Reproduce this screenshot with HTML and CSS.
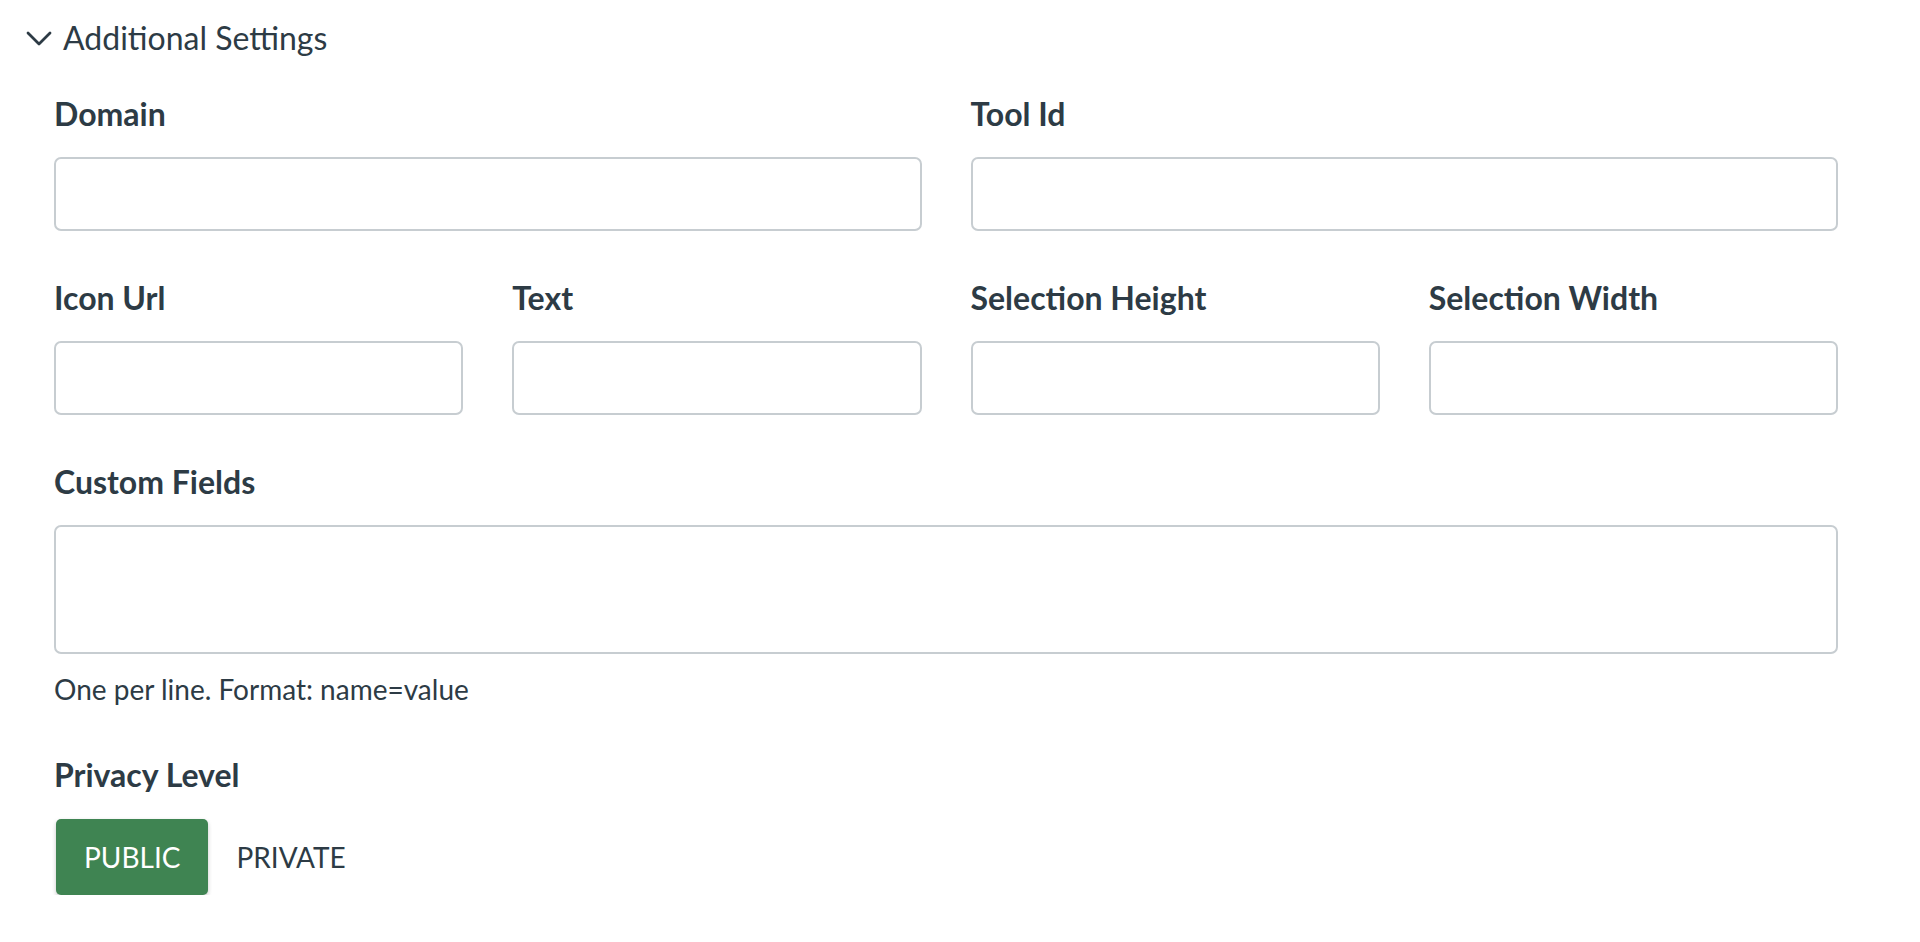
FILE: index.html
```html
<!DOCTYPE html>
<html lang="en">
<head>
<meta charset="utf-8">
<title>Additional Settings</title>
<link rel="stylesheet" href="styles.css">
</head>
<body>
<div class="page">
  <div class="toggle">
    <svg class="chev" viewBox="0 0 26 15" width="26" height="15" aria-hidden="true">
      <path d="M2 2 L13 13 L24 2" fill="none" stroke="#2d3b45" stroke-width="2.8" stroke-linecap="round" stroke-linejoin="round"/>
    </svg>
    <span class="toggle-text">Additional Settings</span>
  </div>
  <div class="fields">
    <div class="row two">
      <div class="field"><label class="lbl">Domain</label><input class="inp" type="text"></div>
      <div class="field"><label class="lbl">Tool Id</label><input class="inp" type="text"></div>
    </div>
    <div class="row four">
      <div class="field"><label class="lbl">Icon Url</label><input class="inp" type="text"></div>
      <div class="field"><label class="lbl">Text</label><input class="inp" type="text"></div>
      <div class="field"><label class="lbl">Selection Height</label><input class="inp" type="text"></div>
      <div class="field"><label class="lbl">Selection Width</label><input class="inp" type="text"></div>
    </div>
    <div class="row">
      <div class="field">
        <label class="lbl">Custom Fields</label>
        <textarea class="area"></textarea>
        <div class="help">One per line. Format: name=value</div>
      </div>
    </div>
    <div class="privacy">
      <div class="lbl">Privacy Level</div>
      <div class="choices">
        <button class="btn active" type="button">PUBLIC</button>
        <button class="btn plain" type="button">PRIVATE</button>
      </div>
    </div>
  </div>
</div>
</body>
</html>
```

FILE: styles.css
```css
* { box-sizing: border-box; }
html, body { margin: 0; padding: 0; background: #fff; }
body {
  font-family: Lato, "Open Sans", sans-serif;
  color: #2d3b45;
}
.toggle {
  display: flex;
  align-items: center;
  gap: 11px;
  height: 76px;
  padding-left: 26px;
}
.chev { display: block; }
.toggle-text {
  font-size: 32px;
  font-weight: 400;
  line-height: 40px;
}
.fields {
  padding: 19px 82px 0 54px;
}
.row {
  display: grid;
  column-gap: 49px;
  margin-bottom: 48px;
}
.row.two { grid-template-columns: 1fr 1fr; }
.row.four { grid-template-columns: 1fr 1fr 1fr 1fr; }
.field { display: flex; flex-direction: column; }
.lbl {
  display: block;
  font-size: 32px;
  font-weight: 700;
  line-height: 38px;
  margin-bottom: 24px;
}
.inp, .area {
  display: block;
  width: 100%;
  border: 2px solid #c7cdd1;
  border-radius: 7px;
  background: #fff;
  font: inherit;
  margin: 0;
}
.inp { height: 74px; }
.area { height: 129px; resize: none; }
.help {
  font-size: 28px;
  line-height: 34px;
  margin-top: 18px;
}
.row:nth-child(3) { margin-bottom: 50px; }
.privacy .lbl { margin-bottom: 25px; }
.choices { display: flex; align-items: center; gap: 0; }
.btn {
  font-family: Lato, sans-serif;
  font-size: 28px;
  height: 76px;
  border: 0;
  margin: 0;
  cursor: pointer;
}
.btn.active {
  background: #3f8452;
  color: #fff;
  padding: 0 28px;
  margin-left: 2px;
  border-radius: 5px;
  box-shadow: 0 2px 4px rgba(0,0,0,0.22);
}
.btn.plain {
  background: transparent;
  color: #2d3b45;
  padding: 0 28px;
}
```
